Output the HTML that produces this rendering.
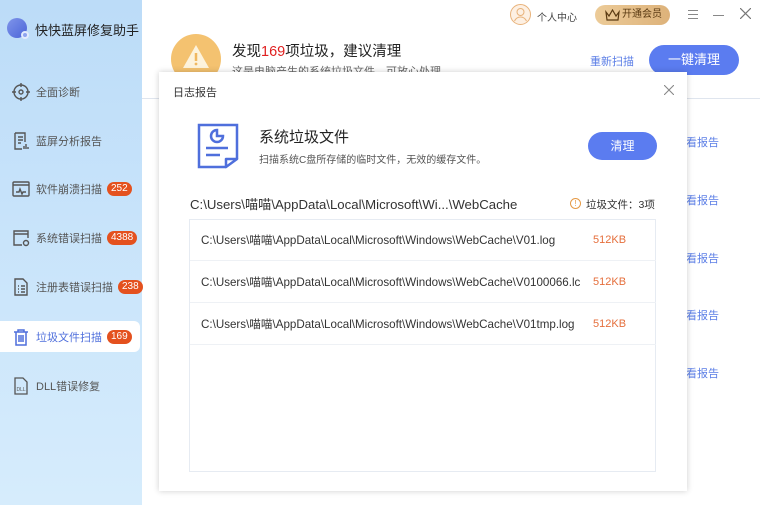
<!DOCTYPE html>
<html><head><meta charset="utf-8"><style>
*{margin:0;padding:0;box-sizing:border-box}
body{width:760px;height:505px;overflow:hidden;position:relative;font-family:"Liberation Sans","Noto Sans CJK SC",sans-serif;background:#fff;color:#333}
.side{position:absolute;left:0;top:0;width:142px;height:505px;background:linear-gradient(180deg,#bcdcf8 0%,#cce6fb 60%,#d6ecfc 100%)}
.abs{position:absolute;white-space:nowrap}
.nav{position:absolute;left:0;width:140px;height:31px;font-size:11px;color:#555;display:flex;align-items:center;padding-left:36px;white-space:nowrap}
.nav svg{position:absolute;left:11px;top:6px}
.badge{background:#e4511e;color:#fff;font-size:10px;border-radius:8px;padding:0 4px;height:14px;line-height:14px;margin-left:5px}
.link{position:absolute;left:686px;font-size:11px;color:#5b7ee6}
.row{position:absolute;left:190px;width:466px;height:41px;border-bottom:1px solid #eef1f5;font-size:11.6px;color:#333;line-height:41px;padding-left:11px;white-space:nowrap}
.row span{position:absolute;left:403px;color:#e56f3c;font-size:11px}
</style></head><body>
<div class="side">
 <div class="abs" style="left:7px;top:18px;width:20px;height:20px;border-radius:50%;background:linear-gradient(135deg,#7f95ea,#4b64d8)"></div>
 <div class="abs" style="left:21px;top:31px;width:8px;height:8px;border-radius:50%;background:#8ea3ef;border:2px solid #e3ebfd"></div>
 <div class="abs" style="left:35px;top:20px;font-size:13px;color:#222">快快蓝屏修复助手</div>
 <div class="nav" style="top:76px"><svg width="20" height="20" viewBox="0 0 20 20" fill="none" stroke="#555" stroke-width="1.4"><circle cx="10" cy="10" r="7"/><circle cx="10" cy="10" r="2"/><path d="M10 1v4M10 15v4M1 10h4M15 10h4"/></svg>全面诊断</div>
 <div class="nav" style="top:125px"><svg width="20" height="20" viewBox="0 0 20 20" fill="none" stroke="#555" stroke-width="1.4"><path d="M4 2h10v9M4 2v16h7M7 6h5M7 9h5M7 12h3M13 18v-3M15 18v-5M17 18v-2"/></svg>蓝屏分析报告</div>
 <div class="nav" style="top:173px"><svg width="20" height="20" viewBox="0 0 20 20" fill="none" stroke="#555" stroke-width="1.4"><rect x="2" y="3" width="16" height="14" rx="1"/><path d="M2 6h16M5 13h3l1-3 2 5 1-2h3"/></svg>软件崩溃扫描<span class="badge">252</span></div>
 <div class="nav" style="top:222px"><svg width="20" height="20" viewBox="0 0 20 20" fill="none" stroke="#555" stroke-width="1.4"><path d="M11 17H3V3h14v7M3 6h14"/><circle cx="15" cy="15" r="2.5"/></svg>系统错误扫描<span class="badge">4388</span></div>
 <div class="nav" style="top:271px"><svg width="20" height="20" viewBox="0 0 20 20" fill="none" stroke="#555" stroke-width="1.4"><path d="M4 2h8l4 4v12H4zM7 9h1M7 12h1M7 15h1M10 9h4M10 12h4M10 15h4"/></svg>注册表错误扫描<span class="badge">238</span></div>
 <div class="abs" style="left:0;top:321px;width:140px;height:31px;background:#fff;border-radius:0 6px 6px 0"></div>
 <div class="nav" style="top:321px;color:#4f6fdc"><svg width="20" height="20" viewBox="0 0 20 20" fill="none" stroke="#4f6fdc" stroke-width="1.5"><path d="M3 5h14M7 5V3h6v2M5 5v13h10V5M8 8v7M10 8v7M12 8v7"/></svg>垃圾文件扫描<span class="badge">169</span></div>
 <div class="nav" style="top:370px"><svg width="20" height="20" viewBox="0 0 20 20" fill="none" stroke="#555" stroke-width="1.3"><path d="M4 2h8l4 4v12H4z"/><text x="5.5" y="15" font-size="5" fill="#555" stroke="none" font-family="Liberation Sans">DLL</text></svg>DLL错误修复</div>
</div>
<!-- top bar -->
<svg class="abs" style="left:510px;top:4px" width="21" height="21" viewBox="0 0 21 21" fill="#fdf0e3" stroke="#e8b27a" stroke-width="1"><circle cx="10.5" cy="10.5" r="10"/><circle cx="10.5" cy="8" r="3.5" fill="none"/><path d="M4.5 17c1.5-3 3.5-4 6-4s4.5 1 6 4" fill="none"/></svg>
<div class="abs" style="left:537px;top:9px;font-size:10px;color:#444">个人中心</div>
<div class="abs" style="left:595px;top:5px;width:75px;height:20px;border-radius:10px;background:linear-gradient(90deg,#eccb98,#ddb27a);font-size:10px;color:#5a3a12;line-height:20px;padding-left:27px">开通会员</div>
<svg class="abs" style="left:605px;top:9px" width="15" height="12" viewBox="0 0 15 12" fill="none" stroke="#5a3a12" stroke-width="1.2"><path d="M1 3l3 4 3.5-6 3.5 6 3-4-1 8H2z"/></svg>
<div class="abs" style="left:688px;top:10px;width:10px;height:1px;background:#888;box-shadow:0 4px 0 #888,0 8px 0 #888"></div>
<div class="abs" style="left:713px;top:15px;width:11px;height:1px;background:#888"></div>
<svg class="abs" style="left:740px;top:8px" width="11" height="11" viewBox="0 0 11 11" stroke="#777" stroke-width="1.2"><path d="M0 0l11 11M11 0L0 11"/></svg>
<!-- header -->
<div class="abs" style="left:171px;top:34px;width:50px;height:50px;border-radius:50%;background:#f4c270"></div>
<svg class="abs" style="left:182px;top:43px" width="28" height="26" viewBox="0 0 28 26"><path d="M14 2L27 25H1z" fill="#fdf3dc"/><path d="M14 10v8" stroke="#f0b860" stroke-width="2.5"/><circle cx="14" cy="21" r="1.4" fill="#f0b860"/></svg>
<div class="abs" style="left:232px;top:40px;font-size:14.5px;color:#222">发现<span style="color:#e02020">169</span>项垃圾，建议清理</div>
<div class="abs" style="left:232px;top:63px;font-size:11px;color:#666">这是电脑产生的系统垃圾文件，可放心处理</div>
<div class="abs" style="left:590px;top:53px;font-size:11px;color:#5b7ee6">重新扫描</div>
<div class="abs" style="left:649px;top:45px;width:90px;height:30px;border-radius:15px;background:#5b7cf0;color:#fff;font-size:13px;text-align:center;line-height:30px">一键清理</div>
<div class="abs" style="left:142px;top:98px;width:618px;height:1px;background:#dfe5ee"></div>
<div class="link" style="top:134px">看报告</div>
<div class="link" style="top:192px">看报告</div>
<div class="link" style="top:250px">看报告</div>
<div class="link" style="top:307px">看报告</div>
<div class="link" style="top:365px">看报告</div>
<!-- dialog -->
<div class="abs" style="left:159px;top:72px;width:528px;height:419px;background:#fff;box-shadow:0 0 6px rgba(0,0,0,.2)"></div>
<div class="abs" style="left:173px;top:84px;font-size:11px;color:#333">日志报告</div>
<svg class="abs" style="left:664px;top:85px" width="10" height="10" viewBox="0 0 10 10" stroke="#888" stroke-width="1.1"><path d="M0 0l10 10M10 0L0 10"/></svg>
<svg class="abs" style="left:196px;top:123px" width="44" height="46" viewBox="0 0 44 46" fill="none" stroke="#4f6fdc" stroke-width="2.5"><path d="M30 44H3V2h38v34"/><path d="M41 36l-11 8v-8z" stroke-linejoin="round"/><path d="M21 7a6 6 0 1 0 6 6h-6z"/><path d="M10 25h22M10 32h14"/></svg>
<div class="abs" style="left:259px;top:126px;font-size:15px;color:#222">系统垃圾文件</div>
<div class="abs" style="left:259px;top:151px;font-size:10px;color:#555">扫描系统C盘所存储的临时文件，无效的缓存文件。</div>
<div class="abs" style="left:588px;top:132px;width:69px;height:28px;border-radius:14px;background:#5b7cf0;color:#fff;font-size:12px;text-align:center;line-height:28px">清理</div>
<div class="abs" style="left:190px;top:194px;font-size:13.2px;color:#333">C:\Users\喵喵\AppData\Local\Microsoft\Wi...\WebCache</div>
<div class="abs" style="left:570px;top:198px;width:11px;height:11px;border-radius:50%;border:1px solid #e59a46;font-size:8px;color:#e59a46;text-align:center;line-height:10px">!</div>
<div class="abs" style="left:586px;top:197px;font-size:10.5px;color:#333">垃圾文件：3项</div>
<div class="abs" style="left:189px;top:219px;width:467px;height:253px;border:1px solid #e6ebf2"></div>
<div class="row" style="top:220px">C:\Users\喵喵\AppData\Local\Microsoft\Windows\WebCache\V01.log<span>512KB</span></div>
<div class="row" style="top:262px">C:\Users\喵喵\AppData\Local\Microsoft\Windows\WebCache\V0100066.lc<span>512KB</span></div>
<div class="row" style="top:304px">C:\Users\喵喵\AppData\Local\Microsoft\Windows\WebCache\V01tmp.log<span>512KB</span></div>
</body></html>
